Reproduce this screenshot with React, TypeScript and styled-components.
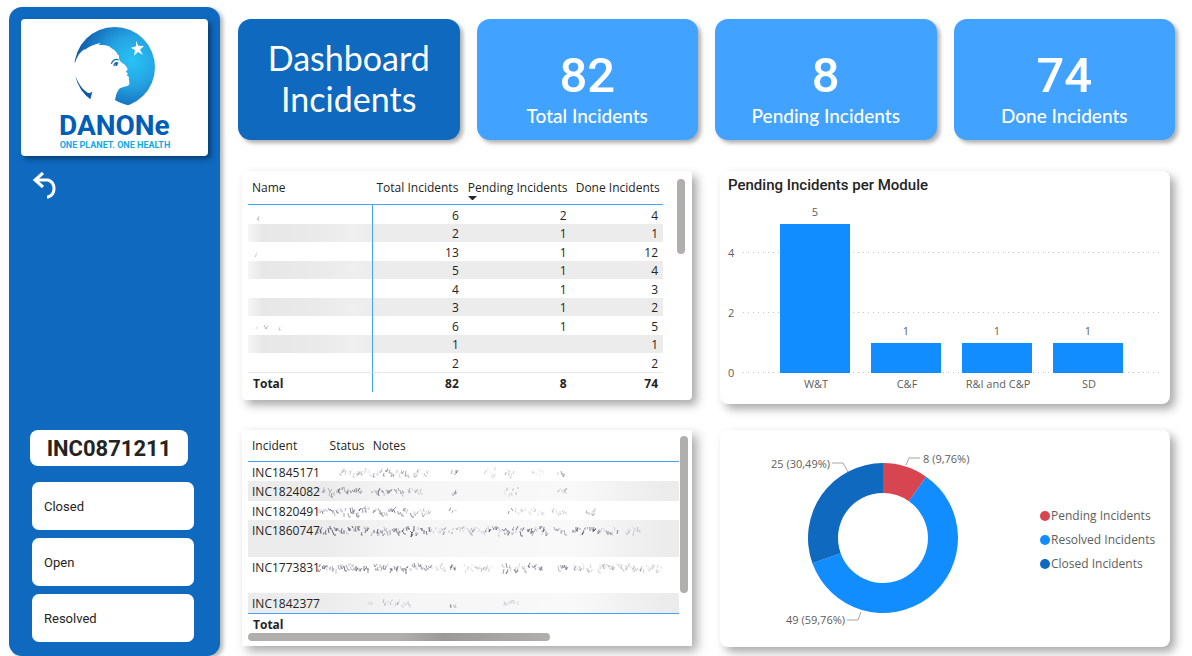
import React from "react";
import styled, { createGlobalStyle } from "styled-components";

const blue = { deep: "#0e69bf", card: "#41a3ff", bar: "#118dff", rule: "#41a3ff" };
const ui = `"Open Sans", "Noto Sans", sans-serif`;
const din = `Roboto, "Liberation Sans", sans-serif`;
const display = `Lato, "Open Sans", sans-serif`;

const GlobalStyle = createGlobalStyle`
  * { box-sizing: border-box; }
  body { margin: 0; background: #fff; font-family: ${ui}; color: #252423; }
`;

const Page = styled.div`
  display: flex;
  gap: 18px;
  min-height: 100vh;
  padding: 7px 17px 0 9px;
`;

const Sidebar = styled.aside`
  display: flex;
  flex-direction: column;
  flex: none;
  width: 211px;
  padding: 12px 12px 14px;
  border-radius: 13px;
  background: ${blue.deep};
  box-shadow: 3px 2px 4px rgba(0, 0, 0, 0.3);
`;

const LogoCard = styled.div`
  display: flex;
  justify-content: center;
  height: 137px;
  padding-top: 6px;
  border-radius: 4px;
  background: #fff;
  box-shadow: 3px 3px 5px rgba(0, 0, 0, 0.4);
`;

const BackButton = styled.button`
  align-self: flex-start;
  margin: 14px 0 0 10px;
  padding: 0;
  border: 0;
  background: none;
  line-height: 0;
  cursor: pointer;
`;

const IncidentBadge = styled.div`
  width: 158px;
  height: 36px;
  margin: auto 0 16px 9px;
  border-radius: 8px;
  background: #fff;
  font: 700 22px/38px ${din};
  text-align: center;
`;

const StatusList = styled.div`
  display: flex;
  flex-direction: column;
  gap: 8px;
  margin: 0 14px 0 11px;
`;

const StatusButton = styled.button`
  height: 48px;
  padding: 0 12px;
  border: 0;
  border-radius: 7px;
  background: #fff;
  color: #252423;
  font: 400 13px ${din};
  text-align: left;
  cursor: pointer;
`;

const Main = styled.main`
  flex: 1;
  min-width: 0;
  padding-top: 12px;
`;

const Cards = styled.header`
  display: grid;
  grid-template-columns: repeat(4, 1fr);
  gap: 17px;
`;

const Card = styled.section<{ $tone?: string }>`
  display: flex;
  flex-direction: column;
  align-items: center;
  justify-content: center;
  height: 121px;
  border-radius: 13px;
  background: ${(p) => p.$tone ?? blue.card};
  color: #fff;
  text-align: center;
  box-shadow: 3px 3px 4px rgba(0, 0, 0, 0.32);
`;

const Heading = styled.h1`
  margin: 0;
  padding-bottom: 4px;
  font: 400 34px/41px ${display};
`;

const Figure = styled.div`
  padding-top: 22px;
  font: 500 49px/50px ${din};
`;

const FigureLabel = styled.div`
  font: 500 19px/30px ${display};
`;

const Panels = styled.div`
  display: grid;
  grid-template-columns: 1fr 1fr;
  gap: 28px;
  padding: 31px 5px 8px 4px;
`;

const Column = styled.div<{ $gap: number }>`
  display: flex;
  flex-direction: column;
  gap: ${(p) => p.$gap}px;
  min-width: 0;
`;

const Panel = styled.section<{ $height: number; $radius: number }>`
  min-height: ${(p) => p.$height}px;
  border-radius: ${(p) => p.$radius}px;
  background: #fff;
  box-shadow: 5px 5px 10px rgba(0, 0, 0, 0.34);
`;

const TableArea = styled.div`
  display: flex;
  align-items: flex-start;
  padding-left: 6px;
`;

const VScroll = styled.div<{ $height: number; $top: number; $left: number; $right: number }>`
  flex: none;
  width: 8px;
  height: ${(p) => p.$height}px;
  margin: ${(p) => `${p.$top}px ${p.$right}px 0 ${p.$left}px`};
  border-radius: 4px;
  background: #b0afad;
`;

const HScroll = styled.div`
  width: 67%;
  height: 8px;
  margin-left: 6px;
  border-radius: 4px;
  background: linear-gradient(90deg, #b0afad 50%, #9b9a98 65%, #b0afad);
`;

const Grid = styled.table`
  flex: 1;
  width: 100%;
  min-width: 0;
  table-layout: fixed;
  border-collapse: separate;
  border-spacing: 0;
  font-size: 12px;
  line-height: 16px;
`;

const Col = styled.col<{ $w: number }>`
  width: ${(p) => p.$w}%;
`;

const Head = styled.th<{ $height: number; $right?: boolean }>`
  position: relative;
  height: ${(p) => p.$height}px;
  padding: 0 7px 0 4px;
  border-bottom: 1px solid ${blue.rule};
  font-size: 12px;
  font-weight: 400;
  text-align: ${(p) => (p.$right ? "right" : "left")};
  white-space: nowrap;
`;

const SortMark = styled.svg`
  position: absolute;
  left: 4px;
  bottom: 3px;
`;

const Row = styled.tr<{ $height: number; $shade?: boolean }>`
  height: ${(p) => p.$height}px;
  background: ${(p) => (p.$shade ? "#ececec" : "#fff")};
`;

const Num = styled.td`
  padding: 2px 5px 0;
  text-align: right;
  line-height: 16px;
`;

const NameCell = styled.td<{ $shade?: boolean }>`
  padding: 0;
  border-right: 1px solid ${blue.rule};
  line-height: 0;
  background: ${(p) =>
    p.$shade ? "linear-gradient(90deg, #f6f6f6, #e7e7e7 12%, #eaeaea 55%, #efefef 85%, #ececec)" : "none"};
`;

const TotalCell = styled.td<{ $right?: boolean; $line?: boolean; $top: string }>`
  height: 20px;
  padding: 2px 5px 0;
  border-top: 1px solid ${(p) => p.$top};
  border-right: ${(p) => (p.$line ? `1px solid ${blue.rule}` : "0")};
  font-weight: 700;
  text-align: ${(p) => (p.$right ? "right" : "left")};
`;

const IncidentCell = styled.td`
  padding: 3px 0 0 4px;
  vertical-align: top;
  white-space: nowrap;
`;

const NotesCell = styled.td<{ $shade?: boolean }>`
  padding: 0;
  vertical-align: top;
  line-height: 0;
  background: ${(p) =>
    p.$shade ? "linear-gradient(90deg, #ececec, #f5f5f6 20%, #f9f9fa 70%, #ececec 95%)" : "none"};
`;

const ChartTitle = styled.h2`
  margin: 0;
  padding: 4px 8px 0;
  font: 500 15px/20px ${din};
`;

const Chart = styled.svg`
  display: block;
  width: 100%;
  font-family: ${ui};
  font-size: 11px;
  fill: #605e5c;
`;

const DonutLayout = styled.div`
  display: grid;
  grid-template-columns: 260px 1fr;
  align-items: center;
`;

const Legend = styled.ul`
  margin: 2px 0 0;
  padding: 0 0 0 60px;
  list-style: none;
`;

const LegendItem = styled.li<{ $dot: string }>`
  display: flex;
  align-items: center;
  gap: 1px;
  color: #605e5c;
  font-size: 12px;
  line-height: 24px;
  white-space: nowrap;

  &::before {
    content: "";
    flex: none;
    width: 10px;
    height: 10px;
    border-radius: 50%;
    background: ${(p) => p.$dot};
  }
`;

const Logo = () => (
  <svg width="112" height="125" viewBox="178 75 336 375" role="img" aria-label="Danone, one planet, one health">
    <defs>
      <radialGradient id="globe" cx="0.72" cy="0.42" r="0.75">
        <stop offset="0" stopColor="#27c3f5" />
        <stop offset="0.4" stopColor="#25a4e3" />
        <stop offset="0.75" stopColor="#1673bf" />
        <stop offset="1" stopColor="#0b4f9f" />
      </radialGradient>
    </defs>
    <circle cx="345" cy="202" r="121" fill="url(#globe)" />
    <path
      fill="#fff"
      d="M214 196 L226 188 C232 168 242 154 256 146 L254 151 C268 140 282 133 303 129 L297 136 C312 133 326 136 334 142 L331 143 C343 147 352 155 354 165 L356 163 C360 171 356 180 364 186 C372 192 380 196 384 207 C384 211 379 212 379 215 L385 221 L381 226 L388 231 C385 237 391 245 389 253 C385 262 364 259 358 268 C350 278 349 288 346 300 C358 307 371 312 385 316 L380 340 L260 340 L272 298 L278 275 C273 277 269 281 264 278 C247 267 237 251 228 230 L214 224 Z"
    />
    <path fill="none" stroke="#176fba" strokeWidth="4" d="M335 191 C339 180 348 175 357 180 M343 199 C343 189 349 186 356 189" />
    <path fill="#12559f" d="M347 188 l8 2 l-3 8 l-5 -1 z" />
    <path fill="#fff" d="M409 122 L416 137 L433 138 L421 149 L430 165 L415 156 L403 167 L406 151 L394 143 L409 139 Z" />
    <text x="178" y="405" fill="#005eb8" fontFamily={din} fontSize="84" fontWeight="700">DANONe</text>
    <text x="180" y="443" fill="#12a9e8" fontFamily={din} fontSize="27" fontWeight="700">ONE PLANET. ONE HEALTH</text>
  </svg>
);

/* Short broken pen strokes standing in for text that has been rubbed out. */
const smudge = (seed: number, spans: number[][]) => {
  let s = seed * 7919 + 13;
  const rnd = () => {
    s = (s * 1103515245 + 12345) % 2147483648;
    return s / 2147483648;
  };
  const marks: { d: string; o: number }[] = [];
  spans.forEach(([from, to, strength]) => {
    for (let x = from; x < to; x += 2) {
      const y = 6 + Math.round(rnd() * 6);
      const dx = Math.round(rnd() * 4 - 2);
      const dy = 2 + Math.round(rnd() * 3);
      const tail = rnd();
      marks.push({
        d: `M${x} ${y}l${dx} ${dy}${tail > 0.7 ? "l2 -3" : tail > 0.35 ? "h2" : ""}`,
        o: (strength / 100) * (0.2 + rnd() * 0.7),
      });
    }
  });
  return marks;
};

const Smudge = ({ seed, spans }: { seed: number; spans: number[][] }) => (
  <svg width="100%" height="18" overflow="visible" aria-hidden="true">
    {smudge(seed, spans).map((m, i) => (
      <path key={i} d={m.d} fill="none" stroke="#47445a" strokeWidth="1" opacity={m.o} />
    ))}
  </svg>
);

const names = [
  { total: 6, pending: 2, done: 4, spans: [[9, 13, 40]] },
  { total: 2, pending: 1, done: 1, spans: [] },
  { total: 13, pending: 1, done: 12, spans: [[9, 11, 50]] },
  { total: 5, pending: 1, done: 4, spans: [] },
  { total: 4, pending: 1, done: 3, spans: [] },
  { total: 3, pending: 1, done: 2, spans: [] },
  { total: 6, pending: 1, done: 5, spans: [[9, 11, 40], [16, 18, 60], [32, 33, 40]] },
  { total: 1, pending: null, done: 1, spans: [] },
  { total: 2, pending: null, done: 2, spans: [] },
];

const incidents = [
  { id: "INC1845171", height: 19, spans: [[14, 46, 45], [48, 84, 60], [88, 102, 40], [126, 131, 90], [160, 172, 20], [180, 190, 45], [206, 220, 20], [233, 239, 65]] },
  { id: "INC1824082", height: 20, spans: [[-6, 38, 65], [46, 80, 80], [82, 98, 50], [126, 131, 60], [178, 194, 40], [232, 241, 45]] },
  { id: "INC1820491", height: 19, spans: [[-8, 44, 80], [48, 86, 75], [88, 104, 60], [125, 131, 60], [183, 187, 75], [190, 218, 25], [228, 241, 35], [261, 270, 50]] },
  { id: "INC1860747", height: 37, spans: [[-8, 44, 95], [46, 106, 100], [108, 122, 45], [124, 132, 100], [135, 162, 50], [162, 222, 85], [228, 240, 75], [246, 294, 75], [300, 316, 30]] },
  { id: "INC1773831", height: 36, spans: [[-8, 44, 85], [48, 106, 90], [110, 122, 25], [124, 131, 100], [138, 168, 35], [176, 218, 70], [232, 242, 75], [248, 268, 50], [272, 335, 35]] },
  { id: "INC1842377", height: 20, spans: [[43, 47, 25], [58, 86, 40], [125, 130, 65], [176, 194, 25]] },
];

const modules = [
  { name: "W&T", value: 5 },
  { name: "C&F", value: 1 },
  { name: "R&I and C&P", value: 1 },
  { name: "SD", value: 1 },
];

const slices = [
  { name: "Pending Incidents", value: 8, color: "#d64550" },
  { name: "Resolved Incidents", value: 49, color: blue.bar },
  { name: "Closed Incidents", value: 25, color: blue.deep },
];

const ring = (from: number, to: number) => {
  const at = (share: number, r: number) =>
    `${163 + r * Math.sin(share * 2 * Math.PI)} ${108 - r * Math.cos(share * 2 * Math.PI)}`;
  const large = to - from > 0.5 ? 1 : 0;
  return `M${at(from, 75)}A75 75 0 ${large} 1 ${at(to, 75)}L${at(to, 45)}A45 45 0 ${large} 0 ${at(from, 45)}Z`;
};

const NameTable = () => (
  <TableArea>
    <Grid>
      <colgroup>
        <Col $w={30} />
        <Col $w={22} />
        <Col $w={26} />
        <Col $w={22} />
      </colgroup>
      <thead>
        <tr>
          <Head $height={34}>Name</Head>
          <Head $height={34} $right>Total Incidents</Head>
          <Head $height={34} $right aria-sort="descending">
            Pending Incidents
            <SortMark width="9" height="5" viewBox="0 0 9 5" aria-hidden="true">
              <path d="M0 0h9L5 4H4z" fill="#252423" />
            </SortMark>
          </Head>
          <Head $height={34} $right>Done Incidents</Head>
        </tr>
      </thead>
      <tbody>
        {names.map((n, i) => (
          <Row key={i} $height={i % 2 ? 18 : 19} $shade={i % 2 === 1}>
            <NameCell $shade={i % 2 === 1}>
              <Smudge seed={i + 1} spans={n.spans} />
            </NameCell>
            <Num>{n.total}</Num>
            <Num>{n.pending}</Num>
            <Num>{n.done}</Num>
          </Row>
        ))}
      </tbody>
      <tfoot>
        <tr>
          <TotalCell $top="#e6e6e6" $line>Total</TotalCell>
          <TotalCell $top="#e6e6e6" $right>82</TotalCell>
          <TotalCell $top="#e6e6e6" $right>8</TotalCell>
          <TotalCell $top="#e6e6e6" $right>74</TotalCell>
        </tr>
      </tfoot>
    </Grid>
    <VScroll $height={75} $top={8} $left={14} $right={7} />
  </TableArea>
);

const IncidentTable = () => (
  <>
    <TableArea>
      <Grid>
        <colgroup>
          <Col $w={18} />
          <Col $w={10} />
          <Col $w={72} />
        </colgroup>
        <thead>
          <tr>
            <Head $height={32}>Incident</Head>
            <Head $height={32}>Status</Head>
            <Head $height={32}>Notes</Head>
          </tr>
        </thead>
        <tbody>
          {incidents.map((n, i) => (
            <Row key={n.id} $height={n.height} $shade={i % 2 === 1}>
              <IncidentCell>{n.id}</IncidentCell>
              <NotesCell colSpan={2} $shade={i % 2 === 1}>
                <Smudge seed={i + 21} spans={n.spans} />
              </NotesCell>
            </Row>
          ))}
        </tbody>
        <tfoot>
          <tr>
            <TotalCell $top={blue.rule} colSpan={3}>Total</TotalCell>
          </tr>
        </tfoot>
      </Grid>
      <VScroll $height={157} $top={6} $left={1} $right={4} />
    </TableArea>
    <HScroll />
  </>
);

const BarChart = () => (
  <Chart viewBox="0 0 450 208" role="img" aria-label="Pending incidents per module">
    {[0, 2, 4].map((v) => (
      <g key={v}>
        <text x="8" y={182 - v * 30}>{v}</text>
        <path d={`M23 ${177 - v * 30}.5H441`} stroke="#c8c6c4" strokeDasharray="1 4" />
      </g>
    ))}
    {modules.map((m, i) => (
      <g key={m.name} textAnchor="middle">
        <rect x={60 + i * 91} y={178 - Math.round(m.value * 29.7)} width="70" height={Math.round(m.value * 29.7)} fill={blue.bar} />
        <text x={95 + i * 91} y={170 - Math.round(m.value * 29.7)}>{m.value}</text>
        <text x={96 + i * 91} y="193">{m.name}</text>
      </g>
    ))}
  </Chart>
);

const Donut = () => {
  const total = slices.reduce((sum, s) => sum + s.value, 0);
  let start = 0;
  return (
    <DonutLayout>
      <Chart viewBox="0 0 260 217" role="img" aria-label="Incidents by state">
        {slices.map((s) => {
          const from = start / total;
          start += s.value;
          return <path key={s.name} d={ring(from, start / total)} fill={s.color} />;
        })}
        <path d="M186 35L189 28H200M128 42L123 33H112M141 182L138 190H127" fill="none" stroke="#a6a5a3" />
        <text x="203" y="33">8 (9,76%)</text>
        <text x="51" y="38">25 (30,49%)</text>
        <text x="66" y="194">49 (59,76%)</text>
      </Chart>
      <Legend>
        {slices.map((s) => (
          <LegendItem key={s.name} $dot={s.color}>{s.name}</LegendItem>
        ))}
      </Legend>
    </DonutLayout>
  );
};

export default function App() {
  return (
    <>
      <GlobalStyle />
      <Page>
        <Sidebar>
          <LogoCard>
            <Logo />
          </LogoCard>
          <BackButton aria-label="Back">
            <svg width="30" height="30" viewBox="0 0 30 30" fill="none" stroke="#fff" strokeWidth="3">
              <path d="M12 3L4 10L12 17M4 10H17A9 9 0 0 1 17 27H16" />
            </svg>
          </BackButton>
          <IncidentBadge>INC0871211</IncidentBadge>
          <StatusList>
            <StatusButton>Closed</StatusButton>
            <StatusButton>Open</StatusButton>
            <StatusButton>Resolved</StatusButton>
          </StatusList>
        </Sidebar>
        <Main>
          <Cards>
            <Card $tone={blue.deep}>
              <Heading>Dashboard<br />Incidents</Heading>
            </Card>
            <Card>
              <Figure>82</Figure>
              <FigureLabel>Total Incidents</FigureLabel>
            </Card>
            <Card>
              <Figure>8</Figure>
              <FigureLabel>Pending Incidents</FigureLabel>
            </Card>
            <Card>
              <Figure>74</Figure>
              <FigureLabel>Done Incidents</FigureLabel>
            </Card>
          </Cards>
          <Panels>
            <Column $gap={30}>
              <Panel $height={229} $radius={4}>
                <NameTable />
              </Panel>
              <Panel $height={216} $radius={0}>
                <IncidentTable />
              </Panel>
            </Column>
            <Column $gap={26}>
              <Panel $height={233} $radius={8}>
                <ChartTitle>Pending Incidents per Module</ChartTitle>
                <BarChart />
              </Panel>
              <Panel $height={217} $radius={8}>
                <Donut />
              </Panel>
            </Column>
          </Panels>
        </Main>
      </Page>
    </>
  );
}
